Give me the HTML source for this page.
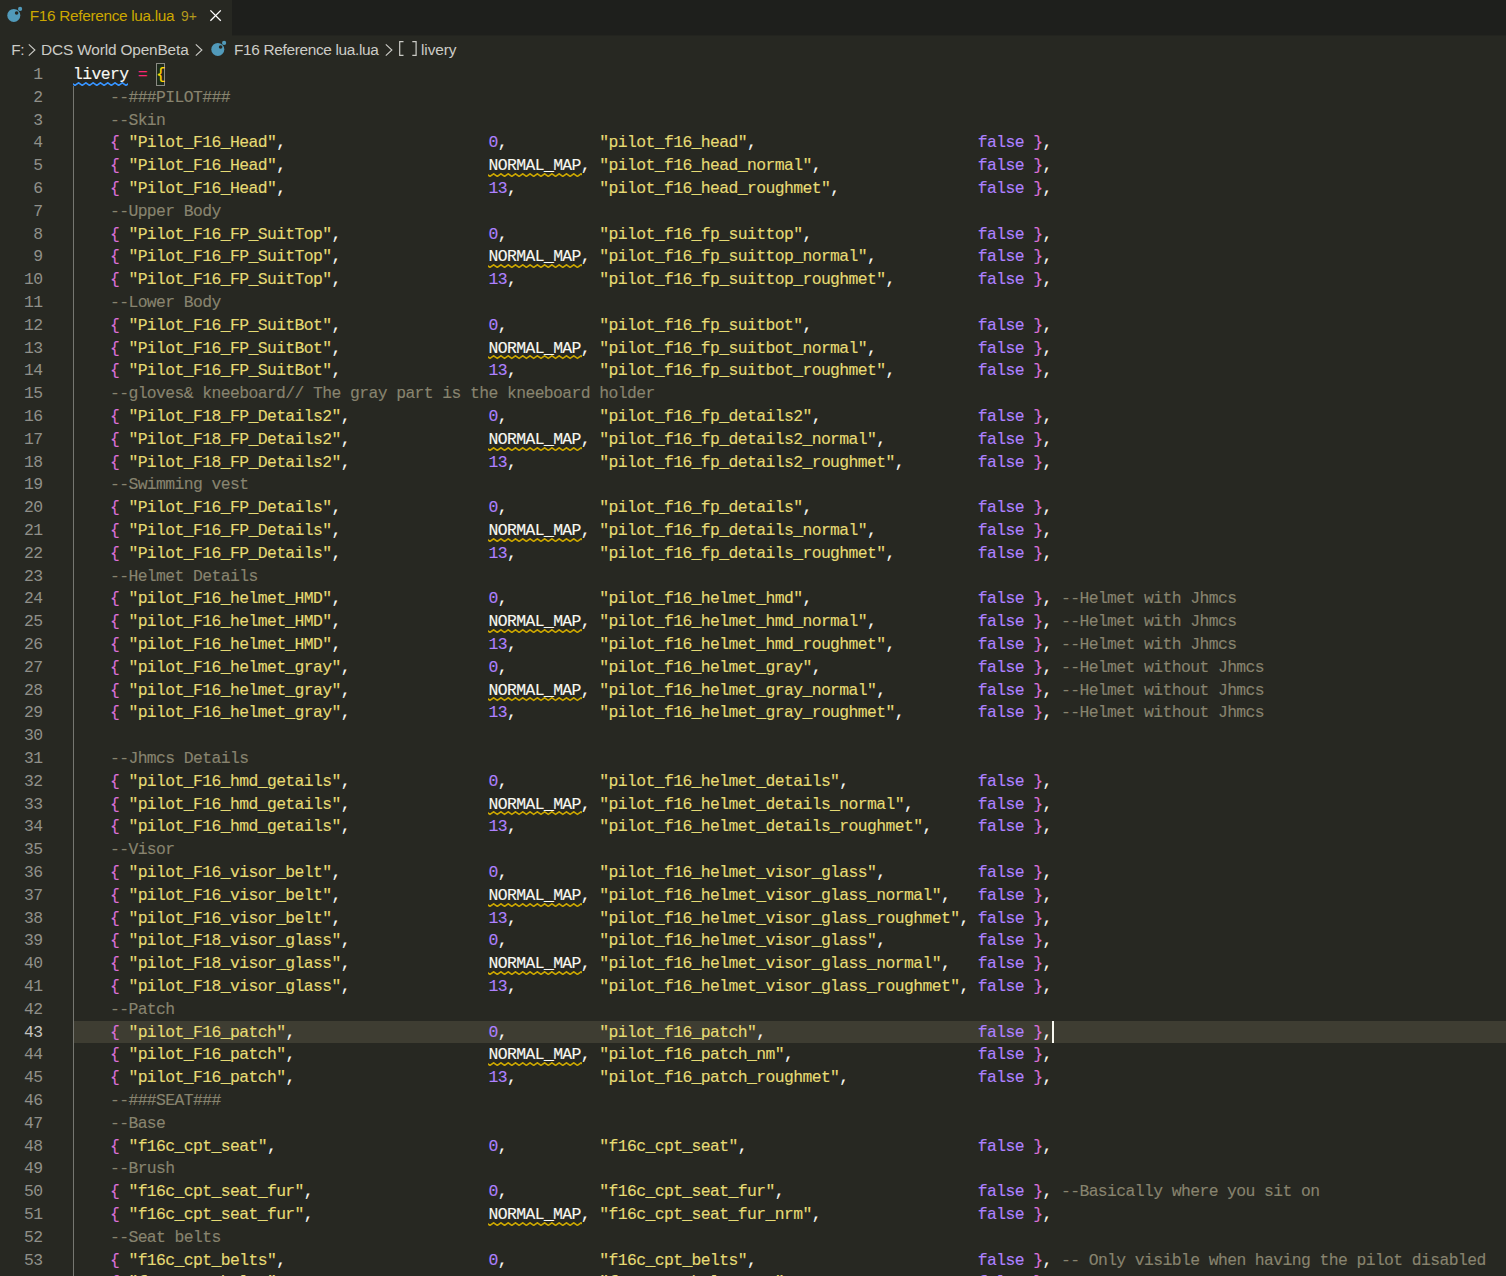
<!DOCTYPE html>
<html><head><meta charset="utf-8"><style>
*{margin:0;padding:0;box-sizing:border-box}
html,body{width:1506px;height:1276px;overflow:hidden;background:#272822}
body{position:relative;font-family:"Liberation Sans",sans-serif}
#tabs{position:absolute;left:0;top:0;width:1506px;height:35px;background:#1e1f1c}
#tabedge{position:absolute;left:232px;top:35px;width:1274px;height:1px;background:#23241f}
#tab{position:absolute;left:0;top:0;width:232px;height:36px;background:#272822}
.ui{position:absolute;white-space:pre;line-height:20px}
#tabtitle{left:30px;top:5px;line-height:20px;color:#cca700}
#tabcount{left:180.5px;top:5px;line-height:20px;color:#cca700;font-size:14.6px}
.crumb{top:39px;line-height:20px;color:#ccccc7}
.chev{position:absolute;width:8px;height:14px}
.ln{position:absolute;left:73.0px;height:22.8px;line-height:22.8px;white-space:pre;font-family:"Liberation Mono",monospace;font-size:16.4px;letter-spacing:-0.6034px;color:#f8f8f2;-webkit-text-stroke:0.12px currentColor}
.num{position:absolute;left:0;width:42.4px;text-align:right;height:22.8px;line-height:22.8px;font-family:"Liberation Mono",monospace;font-size:16.4px;letter-spacing:-0.6034px;color:#90908a}
.num.act{color:#c2c2bf}
.c{color:#88846f}
.s{color:#e6db74}
.n{color:#ae81ff}
.b{color:#da70d6}
.g{color:#ffd700}
.op{color:#f92672}
.nm{}
#curline{position:absolute;left:73px;top:1020.50px;width:1433px;height:22.8px;background:#3e3d32}
#guide{position:absolute;left:73px;top:86px;width:1px;height:1190px;background:#767771}
#bm{position:absolute;left:156px;top:63px;width:9px;height:23px;border:1px solid #8a8a84;background:#1f2a1c}
#cursor{position:absolute;left:1052px;top:1021px;width:2px;height:22px;background:#f8f8f0}
.sq{position:absolute;height:4px;background-repeat:repeat-x;background-size:7.2px 4px}
</style></head><body>
<div id="tabs"></div><div id="tabedge"></div><div id="tab"></div>
<svg width="24" height="24" viewBox="0 0 24 24" style="position:absolute;left:0px;top:0px"><circle cx="13.8" cy="15.4" r="6.5" fill="#519aba"/><circle cx="16.6" cy="13" r="1.8" fill="#272822"/><circle cx="20.1" cy="8.9" r="2.1" fill="#519aba"/></svg>
<div class="ui" style="left:29.80px;top:5.80px;font-size:15.4px;letter-spacing:-0.33px;color:#cca700;">F16 Reference lua.lua</div>
<div class="ui" style="left:181.00px;top:5.60px;font-size:13.9px;letter-spacing:0px;color:#b39a1c;">9+</div>
<svg style="position:absolute;left:209px;top:9px" width="13" height="13" viewBox="0 0 13 13"><path d="M1.4 1.4 L11.8 11.8 M11.8 1.4 L1.4 11.8" stroke="#ffffff" stroke-width="1.3"/></svg>
<div class="ui" style="left:11.20px;top:39.50px;font-size:15.4px;letter-spacing:-0.3px;color:#ccccc7;">F:</div>
<svg class="chev" style="left:28px;top:42.5px" viewBox="0 0 8 14"><path d="M0.8 1.3 L6.9 7 L0.8 12.7" fill="none" stroke="#ccccc7" stroke-width="1.1"/></svg>
<div class="ui" style="left:41.00px;top:39.50px;font-size:15.4px;letter-spacing:-0.15px;color:#ccccc7;">DCS World OpenBeta</div>
<svg class="chev" style="left:194.5px;top:42.5px" viewBox="0 0 8 14"><path d="M0.8 1.3 L6.9 7 L0.8 12.7" fill="none" stroke="#ccccc7" stroke-width="1.1"/></svg>
<svg width="24" height="24" viewBox="0 0 24 24" style="position:absolute;left:203.8px;top:33.9px"><circle cx="13.8" cy="15.4" r="6.5" fill="#519aba"/><circle cx="16.6" cy="13" r="1.8" fill="#272822"/><circle cx="20.1" cy="8.9" r="2.1" fill="#519aba"/></svg>
<div class="ui" style="left:234.00px;top:39.50px;font-size:15.4px;letter-spacing:-0.33px;color:#ccccc7;">F16 Reference lua.lua</div>
<svg class="chev" style="left:385px;top:42.5px" viewBox="0 0 8 14"><path d="M0.8 1.3 L6.9 7 L0.8 12.7" fill="none" stroke="#ccccc7" stroke-width="1.1"/></svg>
<svg style="position:absolute;left:398px;top:40px" width="20" height="17" viewBox="0 0 20 17"><path d="M5.5 1.7 H1.7 V15.3 H5.5 M14.3 1.7 H18.1 V15.3 H14.3" fill="none" stroke="#ccccc7" stroke-width="1.2"/></svg>
<div class="ui" style="left:421.00px;top:39.50px;font-size:15.4px;letter-spacing:-0.1px;color:#ccccc7;">livery</div>
<div id="curline"></div>
<div id="guide"></div>
<div id="bm"></div>
<div class="num" style="top:63.90px">1</div>
<div class="num" style="top:86.70px">2</div>
<div class="num" style="top:109.50px">3</div>
<div class="num" style="top:132.30px">4</div>
<div class="num" style="top:155.10px">5</div>
<div class="num" style="top:177.90px">6</div>
<div class="num" style="top:200.70px">7</div>
<div class="num" style="top:223.50px">8</div>
<div class="num" style="top:246.30px">9</div>
<div class="num" style="top:269.10px">10</div>
<div class="num" style="top:291.90px">11</div>
<div class="num" style="top:314.70px">12</div>
<div class="num" style="top:337.50px">13</div>
<div class="num" style="top:360.30px">14</div>
<div class="num" style="top:383.10px">15</div>
<div class="num" style="top:405.90px">16</div>
<div class="num" style="top:428.70px">17</div>
<div class="num" style="top:451.50px">18</div>
<div class="num" style="top:474.30px">19</div>
<div class="num" style="top:497.10px">20</div>
<div class="num" style="top:519.90px">21</div>
<div class="num" style="top:542.70px">22</div>
<div class="num" style="top:565.50px">23</div>
<div class="num" style="top:588.30px">24</div>
<div class="num" style="top:611.10px">25</div>
<div class="num" style="top:633.90px">26</div>
<div class="num" style="top:656.70px">27</div>
<div class="num" style="top:679.50px">28</div>
<div class="num" style="top:702.30px">29</div>
<div class="num" style="top:725.10px">30</div>
<div class="num" style="top:747.90px">31</div>
<div class="num" style="top:770.70px">32</div>
<div class="num" style="top:793.50px">33</div>
<div class="num" style="top:816.30px">34</div>
<div class="num" style="top:839.10px">35</div>
<div class="num" style="top:861.90px">36</div>
<div class="num" style="top:884.70px">37</div>
<div class="num" style="top:907.50px">38</div>
<div class="num" style="top:930.30px">39</div>
<div class="num" style="top:953.10px">40</div>
<div class="num" style="top:975.90px">41</div>
<div class="num" style="top:998.70px">42</div>
<div class="num act" style="top:1021.50px">43</div>
<div class="num" style="top:1044.30px">44</div>
<div class="num" style="top:1067.10px">45</div>
<div class="num" style="top:1089.90px">46</div>
<div class="num" style="top:1112.70px">47</div>
<div class="num" style="top:1135.50px">48</div>
<div class="num" style="top:1158.30px">49</div>
<div class="num" style="top:1181.10px">50</div>
<div class="num" style="top:1203.90px">51</div>
<div class="num" style="top:1226.70px">52</div>
<div class="num" style="top:1249.50px">53</div>
<div class="num" style="top:1272.30px">54</div>
<div class="ln" style="top:63.90px"><span class="lv">livery</span> <span class="op">=</span> <span class="g">{</span></div>
<div class="ln" style="top:86.70px">    <span class="c">--###PILOT###</span></div>
<div class="ln" style="top:109.50px">    <span class="c">--Skin</span></div>
<div class="ln" style="top:132.30px">    <span class="b">{</span> <span class="s">"Pilot_F16_Head"</span>,                      <span class="n">0</span>,          <span class="s">"pilot_f16_head"</span>,                        <span class="n">false</span> <span class="b">}</span>,</div>
<div class="ln" style="top:155.10px">    <span class="b">{</span> <span class="s">"Pilot_F16_Head"</span>,                      <span class="nm">NORMAL_MAP</span>, <span class="s">"pilot_f16_head_normal"</span>,                 <span class="n">false</span> <span class="b">}</span>,</div>
<div class="ln" style="top:177.90px">    <span class="b">{</span> <span class="s">"Pilot_F16_Head"</span>,                      <span class="n">13</span>,         <span class="s">"pilot_f16_head_roughmet"</span>,               <span class="n">false</span> <span class="b">}</span>,</div>
<div class="ln" style="top:200.70px">    <span class="c">--Upper Body</span></div>
<div class="ln" style="top:223.50px">    <span class="b">{</span> <span class="s">"Pilot_F16_FP_SuitTop"</span>,                <span class="n">0</span>,          <span class="s">"pilot_f16_fp_suittop"</span>,                  <span class="n">false</span> <span class="b">}</span>,</div>
<div class="ln" style="top:246.30px">    <span class="b">{</span> <span class="s">"Pilot_F16_FP_SuitTop"</span>,                <span class="nm">NORMAL_MAP</span>, <span class="s">"pilot_f16_fp_suittop_normal"</span>,           <span class="n">false</span> <span class="b">}</span>,</div>
<div class="ln" style="top:269.10px">    <span class="b">{</span> <span class="s">"Pilot_F16_FP_SuitTop"</span>,                <span class="n">13</span>,         <span class="s">"pilot_f16_fp_suittop_roughmet"</span>,         <span class="n">false</span> <span class="b">}</span>,</div>
<div class="ln" style="top:291.90px">    <span class="c">--Lower Body</span></div>
<div class="ln" style="top:314.70px">    <span class="b">{</span> <span class="s">"Pilot_F16_FP_SuitBot"</span>,                <span class="n">0</span>,          <span class="s">"pilot_f16_fp_suitbot"</span>,                  <span class="n">false</span> <span class="b">}</span>,</div>
<div class="ln" style="top:337.50px">    <span class="b">{</span> <span class="s">"Pilot_F16_FP_SuitBot"</span>,                <span class="nm">NORMAL_MAP</span>, <span class="s">"pilot_f16_fp_suitbot_normal"</span>,           <span class="n">false</span> <span class="b">}</span>,</div>
<div class="ln" style="top:360.30px">    <span class="b">{</span> <span class="s">"Pilot_F16_FP_SuitBot"</span>,                <span class="n">13</span>,         <span class="s">"pilot_f16_fp_suitbot_roughmet"</span>,         <span class="n">false</span> <span class="b">}</span>,</div>
<div class="ln" style="top:383.10px">    <span class="c">--gloves&amp; kneeboard// The gray part is the kneeboard holder</span></div>
<div class="ln" style="top:405.90px">    <span class="b">{</span> <span class="s">"Pilot_F18_FP_Details2"</span>,               <span class="n">0</span>,          <span class="s">"pilot_f16_fp_details2"</span>,                 <span class="n">false</span> <span class="b">}</span>,</div>
<div class="ln" style="top:428.70px">    <span class="b">{</span> <span class="s">"Pilot_F18_FP_Details2"</span>,               <span class="nm">NORMAL_MAP</span>, <span class="s">"pilot_f16_fp_details2_normal"</span>,          <span class="n">false</span> <span class="b">}</span>,</div>
<div class="ln" style="top:451.50px">    <span class="b">{</span> <span class="s">"Pilot_F18_FP_Details2"</span>,               <span class="n">13</span>,         <span class="s">"pilot_f16_fp_details2_roughmet"</span>,        <span class="n">false</span> <span class="b">}</span>,</div>
<div class="ln" style="top:474.30px">    <span class="c">--Swimming vest</span></div>
<div class="ln" style="top:497.10px">    <span class="b">{</span> <span class="s">"Pilot_F16_FP_Details"</span>,                <span class="n">0</span>,          <span class="s">"pilot_f16_fp_details"</span>,                  <span class="n">false</span> <span class="b">}</span>,</div>
<div class="ln" style="top:519.90px">    <span class="b">{</span> <span class="s">"Pilot_F16_FP_Details"</span>,                <span class="nm">NORMAL_MAP</span>, <span class="s">"pilot_f16_fp_details_normal"</span>,           <span class="n">false</span> <span class="b">}</span>,</div>
<div class="ln" style="top:542.70px">    <span class="b">{</span> <span class="s">"Pilot_F16_FP_Details"</span>,                <span class="n">13</span>,         <span class="s">"pilot_f16_fp_details_roughmet"</span>,         <span class="n">false</span> <span class="b">}</span>,</div>
<div class="ln" style="top:565.50px">    <span class="c">--Helmet Details</span></div>
<div class="ln" style="top:588.30px">    <span class="b">{</span> <span class="s">"pilot_F16_helmet_HMD"</span>,                <span class="n">0</span>,          <span class="s">"pilot_f16_helmet_hmd"</span>,                  <span class="n">false</span> <span class="b">}</span>, <span class="c">--Helmet with Jhmcs</span></div>
<div class="ln" style="top:611.10px">    <span class="b">{</span> <span class="s">"pilot_F16_helmet_HMD"</span>,                <span class="nm">NORMAL_MAP</span>, <span class="s">"pilot_f16_helmet_hmd_normal"</span>,           <span class="n">false</span> <span class="b">}</span>, <span class="c">--Helmet with Jhmcs</span></div>
<div class="ln" style="top:633.90px">    <span class="b">{</span> <span class="s">"pilot_F16_helmet_HMD"</span>,                <span class="n">13</span>,         <span class="s">"pilot_f16_helmet_hmd_roughmet"</span>,         <span class="n">false</span> <span class="b">}</span>, <span class="c">--Helmet with Jhmcs</span></div>
<div class="ln" style="top:656.70px">    <span class="b">{</span> <span class="s">"pilot_F16_helmet_gray"</span>,               <span class="n">0</span>,          <span class="s">"pilot_f16_helmet_gray"</span>,                 <span class="n">false</span> <span class="b">}</span>, <span class="c">--Helmet without Jhmcs</span></div>
<div class="ln" style="top:679.50px">    <span class="b">{</span> <span class="s">"pilot_F16_helmet_gray"</span>,               <span class="nm">NORMAL_MAP</span>, <span class="s">"pilot_f16_helmet_gray_normal"</span>,          <span class="n">false</span> <span class="b">}</span>, <span class="c">--Helmet without Jhmcs</span></div>
<div class="ln" style="top:702.30px">    <span class="b">{</span> <span class="s">"pilot_F16_helmet_gray"</span>,               <span class="n">13</span>,         <span class="s">"pilot_f16_helmet_gray_roughmet"</span>,        <span class="n">false</span> <span class="b">}</span>, <span class="c">--Helmet without Jhmcs</span></div>
<div class="ln" style="top:725.10px"></div>
<div class="ln" style="top:747.90px">    <span class="c">--Jhmcs Details</span></div>
<div class="ln" style="top:770.70px">    <span class="b">{</span> <span class="s">"pilot_F16_hmd_getails"</span>,               <span class="n">0</span>,          <span class="s">"pilot_f16_helmet_details"</span>,              <span class="n">false</span> <span class="b">}</span>,</div>
<div class="ln" style="top:793.50px">    <span class="b">{</span> <span class="s">"pilot_F16_hmd_getails"</span>,               <span class="nm">NORMAL_MAP</span>, <span class="s">"pilot_f16_helmet_details_normal"</span>,       <span class="n">false</span> <span class="b">}</span>,</div>
<div class="ln" style="top:816.30px">    <span class="b">{</span> <span class="s">"pilot_F16_hmd_getails"</span>,               <span class="n">13</span>,         <span class="s">"pilot_f16_helmet_details_roughmet"</span>,     <span class="n">false</span> <span class="b">}</span>,</div>
<div class="ln" style="top:839.10px">    <span class="c">--Visor</span></div>
<div class="ln" style="top:861.90px">    <span class="b">{</span> <span class="s">"pilot_F16_visor_belt"</span>,                <span class="n">0</span>,          <span class="s">"pilot_f16_helmet_visor_glass"</span>,          <span class="n">false</span> <span class="b">}</span>,</div>
<div class="ln" style="top:884.70px">    <span class="b">{</span> <span class="s">"pilot_F16_visor_belt"</span>,                <span class="nm">NORMAL_MAP</span>, <span class="s">"pilot_f16_helmet_visor_glass_normal"</span>,   <span class="n">false</span> <span class="b">}</span>,</div>
<div class="ln" style="top:907.50px">    <span class="b">{</span> <span class="s">"pilot_F16_visor_belt"</span>,                <span class="n">13</span>,         <span class="s">"pilot_f16_helmet_visor_glass_roughmet"</span>, <span class="n">false</span> <span class="b">}</span>,</div>
<div class="ln" style="top:930.30px">    <span class="b">{</span> <span class="s">"pilot_F18_visor_glass"</span>,               <span class="n">0</span>,          <span class="s">"pilot_f16_helmet_visor_glass"</span>,          <span class="n">false</span> <span class="b">}</span>,</div>
<div class="ln" style="top:953.10px">    <span class="b">{</span> <span class="s">"pilot_F18_visor_glass"</span>,               <span class="nm">NORMAL_MAP</span>, <span class="s">"pilot_f16_helmet_visor_glass_normal"</span>,   <span class="n">false</span> <span class="b">}</span>,</div>
<div class="ln" style="top:975.90px">    <span class="b">{</span> <span class="s">"pilot_F18_visor_glass"</span>,               <span class="n">13</span>,         <span class="s">"pilot_f16_helmet_visor_glass_roughmet"</span>, <span class="n">false</span> <span class="b">}</span>,</div>
<div class="ln" style="top:998.70px">    <span class="c">--Patch</span></div>
<div class="ln" style="top:1021.50px">    <span class="b">{</span> <span class="s">"pilot_F16_patch"</span>,                     <span class="n">0</span>,          <span class="s">"pilot_f16_patch"</span>,                       <span class="n">false</span> <span class="b">}</span>,</div>
<div class="ln" style="top:1044.30px">    <span class="b">{</span> <span class="s">"pilot_F16_patch"</span>,                     <span class="nm">NORMAL_MAP</span>, <span class="s">"pilot_f16_patch_nm"</span>,                    <span class="n">false</span> <span class="b">}</span>,</div>
<div class="ln" style="top:1067.10px">    <span class="b">{</span> <span class="s">"pilot_F16_patch"</span>,                     <span class="n">13</span>,         <span class="s">"pilot_f16_patch_roughmet"</span>,              <span class="n">false</span> <span class="b">}</span>,</div>
<div class="ln" style="top:1089.90px">    <span class="c">--###SEAT###</span></div>
<div class="ln" style="top:1112.70px">    <span class="c">--Base</span></div>
<div class="ln" style="top:1135.50px">    <span class="b">{</span> <span class="s">"f16c_cpt_seat"</span>,                       <span class="n">0</span>,          <span class="s">"f16c_cpt_seat"</span>,                         <span class="n">false</span> <span class="b">}</span>,</div>
<div class="ln" style="top:1158.30px">    <span class="c">--Brush</span></div>
<div class="ln" style="top:1181.10px">    <span class="b">{</span> <span class="s">"f16c_cpt_seat_fur"</span>,                   <span class="n">0</span>,          <span class="s">"f16c_cpt_seat_fur"</span>,                     <span class="n">false</span> <span class="b">}</span>, <span class="c">--Basically where you sit on</span></div>
<div class="ln" style="top:1203.90px">    <span class="b">{</span> <span class="s">"f16c_cpt_seat_fur"</span>,                   <span class="nm">NORMAL_MAP</span>, <span class="s">"f16c_cpt_seat_fur_nrm"</span>,                 <span class="n">false</span> <span class="b">}</span>,</div>
<div class="ln" style="top:1226.70px">    <span class="c">--Seat belts</span></div>
<div class="ln" style="top:1249.50px">    <span class="b">{</span> <span class="s">"f16c_cpt_belts"</span>,                      <span class="n">0</span>,          <span class="s">"f16c_cpt_belts"</span>,                        <span class="n">false</span> <span class="b">}</span>, <span class="c">-- Only visible when having the pilot disabled</span></div>
<div class="ln" style="top:1272.30px">    <span class="b">{</span> <span class="s">"f16c_cpt_belts"</span>,                      <span class="nm">NORMAL_MAP</span>, <span class="s">"f16c_cpt_belts_nrm"</span>,                    <span class="n">false</span> <span class="b">}</span>,</div>
<svg style="position:absolute;left:72.80px;top:81.70px" width="55.40" height="4.4" viewBox="0 0 55.40 4.4"><polyline points="-5.40,3.4 -1.75,0.8 1.90,3.4 5.55,0.8 9.20,3.4 12.85,0.8 16.50,3.4 20.15,0.8 23.80,3.4 27.45,0.8 31.10,3.4 34.75,0.8 38.40,3.4 42.05,0.8 45.70,3.4 49.35,0.8 53.00,3.4 56.65,0.8 60.30,3.4 63.95,0.8 67.60,3.4 71.25,0.8" fill="none" stroke="#3794ff" stroke-width="1.6" stroke-linejoin="miter"/></svg>
<svg style="position:absolute;left:487.60px;top:172.90px" width="94.20" height="4.4" viewBox="0 0 94.20 4.4"><polyline points="-5.40,3.4 -1.75,0.8 1.90,3.4 5.55,0.8 9.20,3.4 12.85,0.8 16.50,3.4 20.15,0.8 23.80,3.4 27.45,0.8 31.10,3.4 34.75,0.8 38.40,3.4 42.05,0.8 45.70,3.4 49.35,0.8 53.00,3.4 56.65,0.8 60.30,3.4 63.95,0.8 67.60,3.4 71.25,0.8 74.90,3.4 78.55,0.8 82.20,3.4 85.85,0.8 89.50,3.4 93.15,0.8 96.80,3.4 100.45,0.8 104.10,3.4 107.75,0.8" fill="none" stroke="#cca700" stroke-width="1.6" stroke-linejoin="miter"/></svg>
<svg style="position:absolute;left:487.60px;top:264.10px" width="94.20" height="4.4" viewBox="0 0 94.20 4.4"><polyline points="-5.40,3.4 -1.75,0.8 1.90,3.4 5.55,0.8 9.20,3.4 12.85,0.8 16.50,3.4 20.15,0.8 23.80,3.4 27.45,0.8 31.10,3.4 34.75,0.8 38.40,3.4 42.05,0.8 45.70,3.4 49.35,0.8 53.00,3.4 56.65,0.8 60.30,3.4 63.95,0.8 67.60,3.4 71.25,0.8 74.90,3.4 78.55,0.8 82.20,3.4 85.85,0.8 89.50,3.4 93.15,0.8 96.80,3.4 100.45,0.8 104.10,3.4 107.75,0.8" fill="none" stroke="#cca700" stroke-width="1.6" stroke-linejoin="miter"/></svg>
<svg style="position:absolute;left:487.60px;top:355.30px" width="94.20" height="4.4" viewBox="0 0 94.20 4.4"><polyline points="-5.40,3.4 -1.75,0.8 1.90,3.4 5.55,0.8 9.20,3.4 12.85,0.8 16.50,3.4 20.15,0.8 23.80,3.4 27.45,0.8 31.10,3.4 34.75,0.8 38.40,3.4 42.05,0.8 45.70,3.4 49.35,0.8 53.00,3.4 56.65,0.8 60.30,3.4 63.95,0.8 67.60,3.4 71.25,0.8 74.90,3.4 78.55,0.8 82.20,3.4 85.85,0.8 89.50,3.4 93.15,0.8 96.80,3.4 100.45,0.8 104.10,3.4 107.75,0.8" fill="none" stroke="#cca700" stroke-width="1.6" stroke-linejoin="miter"/></svg>
<svg style="position:absolute;left:487.60px;top:446.50px" width="94.20" height="4.4" viewBox="0 0 94.20 4.4"><polyline points="-5.40,3.4 -1.75,0.8 1.90,3.4 5.55,0.8 9.20,3.4 12.85,0.8 16.50,3.4 20.15,0.8 23.80,3.4 27.45,0.8 31.10,3.4 34.75,0.8 38.40,3.4 42.05,0.8 45.70,3.4 49.35,0.8 53.00,3.4 56.65,0.8 60.30,3.4 63.95,0.8 67.60,3.4 71.25,0.8 74.90,3.4 78.55,0.8 82.20,3.4 85.85,0.8 89.50,3.4 93.15,0.8 96.80,3.4 100.45,0.8 104.10,3.4 107.75,0.8" fill="none" stroke="#cca700" stroke-width="1.6" stroke-linejoin="miter"/></svg>
<svg style="position:absolute;left:487.60px;top:537.70px" width="94.20" height="4.4" viewBox="0 0 94.20 4.4"><polyline points="-5.40,3.4 -1.75,0.8 1.90,3.4 5.55,0.8 9.20,3.4 12.85,0.8 16.50,3.4 20.15,0.8 23.80,3.4 27.45,0.8 31.10,3.4 34.75,0.8 38.40,3.4 42.05,0.8 45.70,3.4 49.35,0.8 53.00,3.4 56.65,0.8 60.30,3.4 63.95,0.8 67.60,3.4 71.25,0.8 74.90,3.4 78.55,0.8 82.20,3.4 85.85,0.8 89.50,3.4 93.15,0.8 96.80,3.4 100.45,0.8 104.10,3.4 107.75,0.8" fill="none" stroke="#cca700" stroke-width="1.6" stroke-linejoin="miter"/></svg>
<svg style="position:absolute;left:487.60px;top:628.90px" width="94.20" height="4.4" viewBox="0 0 94.20 4.4"><polyline points="-5.40,3.4 -1.75,0.8 1.90,3.4 5.55,0.8 9.20,3.4 12.85,0.8 16.50,3.4 20.15,0.8 23.80,3.4 27.45,0.8 31.10,3.4 34.75,0.8 38.40,3.4 42.05,0.8 45.70,3.4 49.35,0.8 53.00,3.4 56.65,0.8 60.30,3.4 63.95,0.8 67.60,3.4 71.25,0.8 74.90,3.4 78.55,0.8 82.20,3.4 85.85,0.8 89.50,3.4 93.15,0.8 96.80,3.4 100.45,0.8 104.10,3.4 107.75,0.8" fill="none" stroke="#cca700" stroke-width="1.6" stroke-linejoin="miter"/></svg>
<svg style="position:absolute;left:487.60px;top:697.30px" width="94.20" height="4.4" viewBox="0 0 94.20 4.4"><polyline points="-5.40,3.4 -1.75,0.8 1.90,3.4 5.55,0.8 9.20,3.4 12.85,0.8 16.50,3.4 20.15,0.8 23.80,3.4 27.45,0.8 31.10,3.4 34.75,0.8 38.40,3.4 42.05,0.8 45.70,3.4 49.35,0.8 53.00,3.4 56.65,0.8 60.30,3.4 63.95,0.8 67.60,3.4 71.25,0.8 74.90,3.4 78.55,0.8 82.20,3.4 85.85,0.8 89.50,3.4 93.15,0.8 96.80,3.4 100.45,0.8 104.10,3.4 107.75,0.8" fill="none" stroke="#cca700" stroke-width="1.6" stroke-linejoin="miter"/></svg>
<svg style="position:absolute;left:487.60px;top:811.30px" width="94.20" height="4.4" viewBox="0 0 94.20 4.4"><polyline points="-5.40,3.4 -1.75,0.8 1.90,3.4 5.55,0.8 9.20,3.4 12.85,0.8 16.50,3.4 20.15,0.8 23.80,3.4 27.45,0.8 31.10,3.4 34.75,0.8 38.40,3.4 42.05,0.8 45.70,3.4 49.35,0.8 53.00,3.4 56.65,0.8 60.30,3.4 63.95,0.8 67.60,3.4 71.25,0.8 74.90,3.4 78.55,0.8 82.20,3.4 85.85,0.8 89.50,3.4 93.15,0.8 96.80,3.4 100.45,0.8 104.10,3.4 107.75,0.8" fill="none" stroke="#cca700" stroke-width="1.6" stroke-linejoin="miter"/></svg>
<svg style="position:absolute;left:487.60px;top:902.50px" width="94.20" height="4.4" viewBox="0 0 94.20 4.4"><polyline points="-5.40,3.4 -1.75,0.8 1.90,3.4 5.55,0.8 9.20,3.4 12.85,0.8 16.50,3.4 20.15,0.8 23.80,3.4 27.45,0.8 31.10,3.4 34.75,0.8 38.40,3.4 42.05,0.8 45.70,3.4 49.35,0.8 53.00,3.4 56.65,0.8 60.30,3.4 63.95,0.8 67.60,3.4 71.25,0.8 74.90,3.4 78.55,0.8 82.20,3.4 85.85,0.8 89.50,3.4 93.15,0.8 96.80,3.4 100.45,0.8 104.10,3.4 107.75,0.8" fill="none" stroke="#cca700" stroke-width="1.6" stroke-linejoin="miter"/></svg>
<svg style="position:absolute;left:487.60px;top:970.90px" width="94.20" height="4.4" viewBox="0 0 94.20 4.4"><polyline points="-5.40,3.4 -1.75,0.8 1.90,3.4 5.55,0.8 9.20,3.4 12.85,0.8 16.50,3.4 20.15,0.8 23.80,3.4 27.45,0.8 31.10,3.4 34.75,0.8 38.40,3.4 42.05,0.8 45.70,3.4 49.35,0.8 53.00,3.4 56.65,0.8 60.30,3.4 63.95,0.8 67.60,3.4 71.25,0.8 74.90,3.4 78.55,0.8 82.20,3.4 85.85,0.8 89.50,3.4 93.15,0.8 96.80,3.4 100.45,0.8 104.10,3.4 107.75,0.8" fill="none" stroke="#cca700" stroke-width="1.6" stroke-linejoin="miter"/></svg>
<svg style="position:absolute;left:487.60px;top:1062.10px" width="94.20" height="4.4" viewBox="0 0 94.20 4.4"><polyline points="-5.40,3.4 -1.75,0.8 1.90,3.4 5.55,0.8 9.20,3.4 12.85,0.8 16.50,3.4 20.15,0.8 23.80,3.4 27.45,0.8 31.10,3.4 34.75,0.8 38.40,3.4 42.05,0.8 45.70,3.4 49.35,0.8 53.00,3.4 56.65,0.8 60.30,3.4 63.95,0.8 67.60,3.4 71.25,0.8 74.90,3.4 78.55,0.8 82.20,3.4 85.85,0.8 89.50,3.4 93.15,0.8 96.80,3.4 100.45,0.8 104.10,3.4 107.75,0.8" fill="none" stroke="#cca700" stroke-width="1.6" stroke-linejoin="miter"/></svg>
<svg style="position:absolute;left:487.60px;top:1221.70px" width="94.20" height="4.4" viewBox="0 0 94.20 4.4"><polyline points="-5.40,3.4 -1.75,0.8 1.90,3.4 5.55,0.8 9.20,3.4 12.85,0.8 16.50,3.4 20.15,0.8 23.80,3.4 27.45,0.8 31.10,3.4 34.75,0.8 38.40,3.4 42.05,0.8 45.70,3.4 49.35,0.8 53.00,3.4 56.65,0.8 60.30,3.4 63.95,0.8 67.60,3.4 71.25,0.8 74.90,3.4 78.55,0.8 82.20,3.4 85.85,0.8 89.50,3.4 93.15,0.8 96.80,3.4 100.45,0.8 104.10,3.4 107.75,0.8" fill="none" stroke="#cca700" stroke-width="1.6" stroke-linejoin="miter"/></svg>
<svg style="position:absolute;left:487.60px;top:1290.10px" width="94.20" height="4.4" viewBox="0 0 94.20 4.4"><polyline points="-5.40,3.4 -1.75,0.8 1.90,3.4 5.55,0.8 9.20,3.4 12.85,0.8 16.50,3.4 20.15,0.8 23.80,3.4 27.45,0.8 31.10,3.4 34.75,0.8 38.40,3.4 42.05,0.8 45.70,3.4 49.35,0.8 53.00,3.4 56.65,0.8 60.30,3.4 63.95,0.8 67.60,3.4 71.25,0.8 74.90,3.4 78.55,0.8 82.20,3.4 85.85,0.8 89.50,3.4 93.15,0.8 96.80,3.4 100.45,0.8 104.10,3.4 107.75,0.8" fill="none" stroke="#cca700" stroke-width="1.6" stroke-linejoin="miter"/></svg>
<div id="cursor"></div>
</body></html>
